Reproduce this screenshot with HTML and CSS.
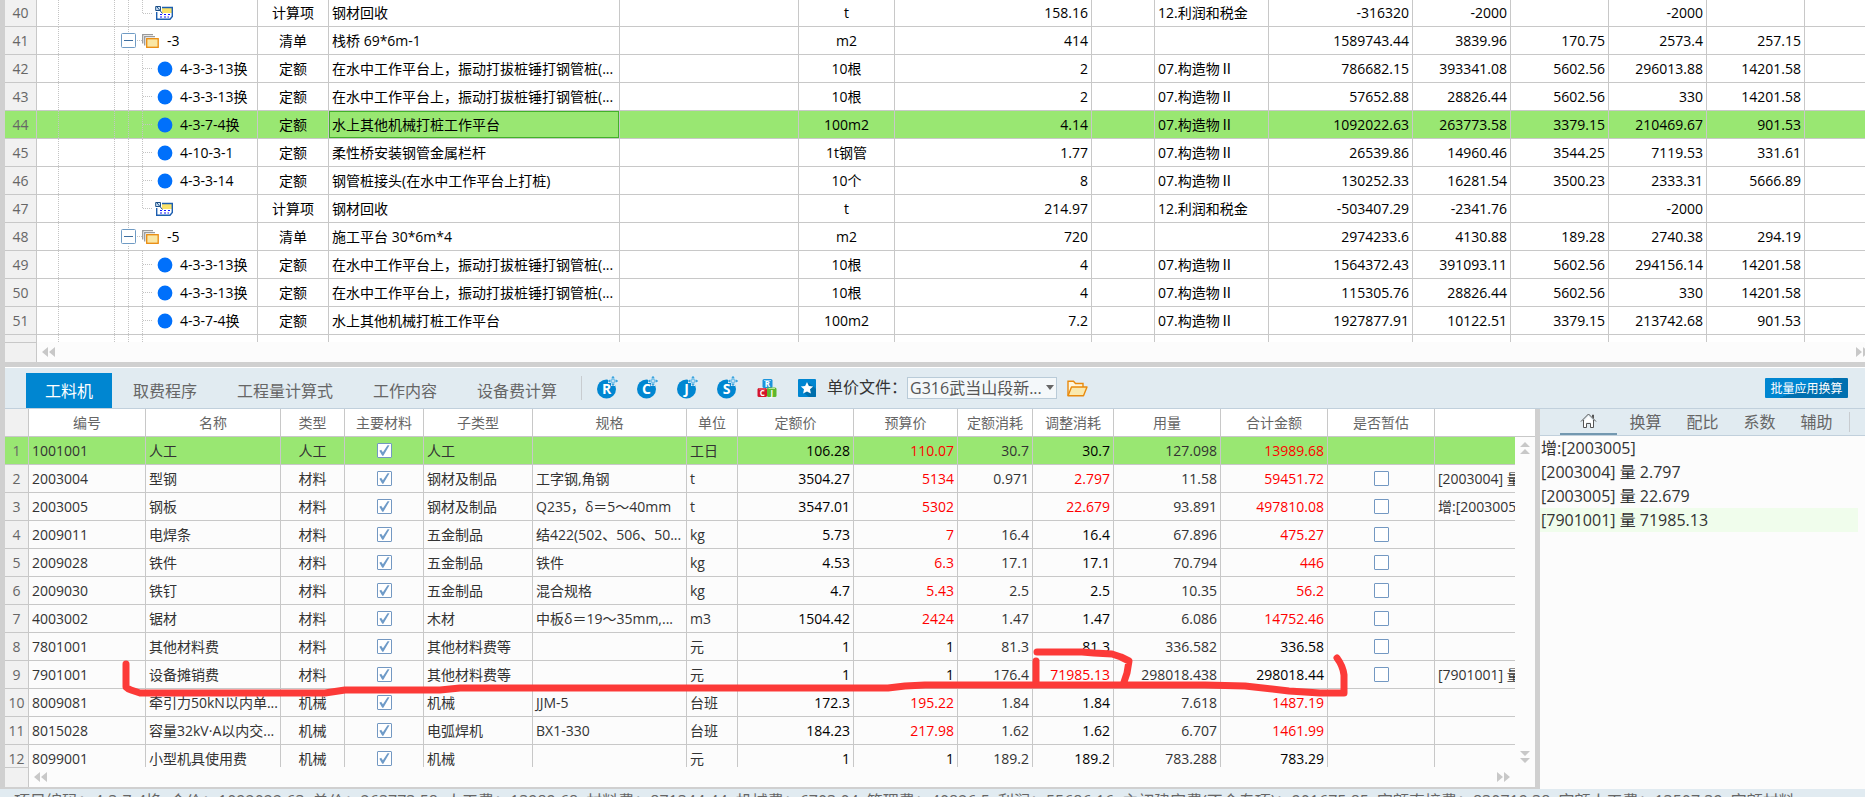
FILE: index.html
```html
<!DOCTYPE html>
<html lang="zh-CN">
<head>
<meta charset="utf-8">
<title>工料机</title>
<link rel="stylesheet" href="styles.css">
</head>
<body>
<svg class="defs" aria-hidden="true">
  <defs>
    <symbol id="g-leaf" viewBox="0 0 120 27"><path d="M21.5 0V27M77.5 0V27M91.5 0V27M105.5 0V27M106 13.5H115" class="guide"/></symbol>
    <symbol id="g-last" viewBox="0 0 118 27"><path d="M21.5 0V27M77.5 0V27M91.5 0V27M105.5 0V13M106 13.5H115" class="guide"/></symbol>
    <symbol id="g-node" viewBox="0 0 105 27"><path d="M21.5 0V27M77.5 0V27M91.5 0V6M91.5 23V27M100 13.5H105" class="guide"/><rect x="84.5" y="6.500" width="14" height="14" rx="1" fill="#fff" stroke="#6f9bc4"/><path d="M87 13.500H96" stroke="#3f6f9f"/></symbol>
    <symbol id="i-dot" viewBox="0 0 16 16"><circle cx="8" cy="8" r="7.400" fill="#0070fb"/></symbol>
    <symbol id="i-stack" viewBox="0 0 17 16"><path d="M.7 10.500V1.700H11M2.700 12.500V3.700H13" fill="none" stroke="#9a9a9a" stroke-width="1.300"/><rect x="4.700" y="5.700" width="11.500" height="8.600" fill="#fae7a5" stroke="#e98a0d" stroke-width="1.300"/></symbol>
    <symbol id="i-calc" viewBox="0 0 18 16"><rect x="2" y="3" width="15" height="11" fill="#fff"/><rect x="7" y="3" width="10" height="5" fill="#fbe36a"/><path d="M7 2.500H17.300V11.500L15 14.300H1.700V7" fill="none" stroke="#1d5fb0" stroke-width="1.400"/><path d="M.7 1.500H5.500V5.500H.7ZM2 2L7.500 8.500" fill="#cfe3f7" stroke="#1c4f87" stroke-width="1"/><path d="M5 9.500H7M9 9.500H11M13 9.500H15M5 12H7M9 12H11M12.500 12H14" stroke="#1414ff" stroke-width="1.200"/></symbol>
    <symbol id="i-plus" viewBox="0 0 10 10"><path d="M5 0V10M0 5H10" stroke="#fff" stroke-width="4"/><path d="M5 .5V9.500M.5 5H9.500" stroke="#0086d1" stroke-width="2.600"/><path d="M5 1.500V8.500M1.500 5H8.500" stroke="#fff" stroke-width="1"/></symbol>
  </defs>
</svg>

<main class="app">
<section class="items">
<table class="grid items-table">
<colgroup><col class="a1"><col class="a2"><col class="a3"><col class="a4"><col class="a5"><col class="a6"><col class="a7"><col class="a8"><col class="a9"><col class="a10"><col class="a11"><col class="a12"><col class="a11"><col class="a12"><col></colgroup>
<tbody>
<tr><th scope="row">40</th><td class="tree"><div><svg class="gl"><use href="#g-last"/></svg><svg class="ic"><use href="#i-calc"/></svg></div></td><td class="c">计算项</td><td>钢材回收</td><td></td><td class="c">t</td><td class="n">158.16</td><td></td><td>12.利润和税金</td><td class="n">-316320</td><td class="n">-2000</td><td></td><td class="n">-2000</td><td></td><td></td></tr>
<tr><th scope="row">41</th><td class="tree"><div><svg class="gn"><use href="#g-node"/></svg><svg class="is"><use href="#i-stack"/></svg><span>-3</span></div></td><td class="c">清单</td><td>栈桥 69*6m-1</td><td></td><td class="c">m2</td><td class="n">414</td><td></td><td></td><td class="n">1589743.44</td><td class="n">3839.96</td><td class="n">170.75</td><td class="n">2573.4</td><td class="n">257.15</td><td></td></tr>
<tr><th scope="row">42</th><td class="tree"><div><svg class="gf"><use href="#g-leaf"/></svg><svg class="id"><use href="#i-dot"/></svg><span>4-3-3-13换</span></div></td><td class="c">定额</td><td>在水中工作平台上，振动打拔桩锤打钢管桩(...</td><td></td><td class="c">10根</td><td class="n">2</td><td></td><td>07.构造物Ⅱ</td><td class="n">786682.15</td><td class="n">393341.08</td><td class="n">5602.56</td><td class="n">296013.88</td><td class="n">14201.58</td><td></td></tr>
<tr><th scope="row">43</th><td class="tree"><div><svg class="gf"><use href="#g-leaf"/></svg><svg class="id"><use href="#i-dot"/></svg><span>4-3-3-13换</span></div></td><td class="c">定额</td><td>在水中工作平台上，振动打拔桩锤打钢管桩(...</td><td></td><td class="c">10根</td><td class="n">2</td><td></td><td>07.构造物Ⅱ</td><td class="n">57652.88</td><td class="n">28826.44</td><td class="n">5602.56</td><td class="n">330</td><td class="n">14201.58</td><td></td></tr>
<tr class="sel"><th scope="row">44</th><td class="tree"><div><svg class="gf"><use href="#g-leaf"/></svg><svg class="id"><use href="#i-dot"/></svg><span>4-3-7-4换</span></div></td><td class="c">定额</td><td class="focus">水上其他机械打桩工作平台</td><td></td><td class="c">100m2</td><td class="n">4.14</td><td></td><td>07.构造物Ⅱ</td><td class="n">1092022.63</td><td class="n">263773.58</td><td class="n">3379.15</td><td class="n">210469.67</td><td class="n">901.53</td><td></td></tr>
<tr><th scope="row">45</th><td class="tree"><div><svg class="gf"><use href="#g-leaf"/></svg><svg class="id"><use href="#i-dot"/></svg><span>4-10-3-1</span></div></td><td class="c">定额</td><td>柔性桥安装钢管金属栏杆</td><td></td><td class="c">1t钢管</td><td class="n">1.77</td><td></td><td>07.构造物Ⅱ</td><td class="n">26539.86</td><td class="n">14960.46</td><td class="n">3544.25</td><td class="n">7119.53</td><td class="n">331.61</td><td></td></tr>
<tr><th scope="row">46</th><td class="tree"><div><svg class="gf"><use href="#g-leaf"/></svg><svg class="id"><use href="#i-dot"/></svg><span>4-3-3-14</span></div></td><td class="c">定额</td><td>钢管桩接头(在水中工作平台上打桩)</td><td></td><td class="c">10个</td><td class="n">8</td><td></td><td>07.构造物Ⅱ</td><td class="n">130252.33</td><td class="n">16281.54</td><td class="n">3500.23</td><td class="n">2333.31</td><td class="n">5666.89</td><td></td></tr>
<tr><th scope="row">47</th><td class="tree"><div><svg class="gl"><use href="#g-last"/></svg><svg class="ic"><use href="#i-calc"/></svg></div></td><td class="c">计算项</td><td>钢材回收</td><td></td><td class="c">t</td><td class="n">214.97</td><td></td><td>12.利润和税金</td><td class="n">-503407.29</td><td class="n">-2341.76</td><td></td><td class="n">-2000</td><td></td><td></td></tr>
<tr><th scope="row">48</th><td class="tree"><div><svg class="gn"><use href="#g-node"/></svg><svg class="is"><use href="#i-stack"/></svg><span>-5</span></div></td><td class="c">清单</td><td>施工平台 30*6m*4</td><td></td><td class="c">m2</td><td class="n">720</td><td></td><td></td><td class="n">2974233.6</td><td class="n">4130.88</td><td class="n">189.28</td><td class="n">2740.38</td><td class="n">294.19</td><td></td></tr>
<tr><th scope="row">49</th><td class="tree"><div><svg class="gf"><use href="#g-leaf"/></svg><svg class="id"><use href="#i-dot"/></svg><span>4-3-3-13换</span></div></td><td class="c">定额</td><td>在水中工作平台上，振动打拔桩锤打钢管桩(...</td><td></td><td class="c">10根</td><td class="n">4</td><td></td><td>07.构造物Ⅱ</td><td class="n">1564372.43</td><td class="n">391093.11</td><td class="n">5602.56</td><td class="n">294156.14</td><td class="n">14201.58</td><td></td></tr>
<tr><th scope="row">50</th><td class="tree"><div><svg class="gf"><use href="#g-leaf"/></svg><svg class="id"><use href="#i-dot"/></svg><span>4-3-3-13换</span></div></td><td class="c">定额</td><td>在水中工作平台上，振动打拔桩锤打钢管桩(...</td><td></td><td class="c">10根</td><td class="n">4</td><td></td><td>07.构造物Ⅱ</td><td class="n">115305.76</td><td class="n">28826.44</td><td class="n">5602.56</td><td class="n">330</td><td class="n">14201.58</td><td></td></tr>
<tr><th scope="row">51</th><td class="tree"><div><svg class="gf"><use href="#g-leaf"/></svg><svg class="id"><use href="#i-dot"/></svg><span>4-3-7-4换</span></div></td><td class="c">定额</td><td>水上其他机械打桩工作平台</td><td></td><td class="c">100m2</td><td class="n">7.2</td><td></td><td>07.构造物Ⅱ</td><td class="n">1927877.91</td><td class="n">10122.51</td><td class="n">3379.15</td><td class="n">213742.68</td><td class="n">901.53</td><td></td></tr>
<tr class="stub"><th></th><td class="tree"><div><svg class="gf"><use href="#g-leaf"/></svg></div></td><td></td><td></td><td></td><td></td><td></td><td></td><td></td><td></td><td></td><td></td><td></td><td></td><td></td></tr>
</tbody>
</table>
<div class="hscroll wide"><span class="corner"></span>
<button type="button" aria-label="向左滚动"><svg width="13" height="10" viewBox="0 0 13 10"><path d="M6 0V10L0 5ZM13 0V10L7 5Z"/></svg></button>
<button type="button" aria-label="向右滚动"><svg width="13" height="10" viewBox="0 0 13 10"><path d="M0 0V10L6 5ZM7 0V10L13 5Z"/></svg></button></div>
</section>

<section class="detail">
<header class="toolbar">
<nav class="tabs"><button type="button" class="on">工料机</button><button type="button">取费程序</button><button type="button">工程量计算式</button><button type="button">工作内容</button><button type="button">设备费计算</button></nav>
<span class="sep"></span>
<div class="tools">
<button type="button" aria-label="人工"><svg width="24" height="26" viewBox="0 0 24 26"><circle cx="10.500" cy="14" r="9.500" fill="#0086d1"/><text x="10.500" y="19">R</text><use href="#i-plus" x="12" y="1" width="10" height="10"/></svg></button>
<button type="button" aria-label="材料"><svg width="24" height="26" viewBox="0 0 24 26"><circle cx="10.500" cy="14" r="9.500" fill="#0086d1"/><text x="10.500" y="19">C</text><use href="#i-plus" x="12" y="1" width="10" height="10"/></svg></button>
<button type="button" aria-label="机械"><svg width="24" height="26" viewBox="0 0 24 26"><circle cx="10.500" cy="14" r="9.500" fill="#0086d1"/><text x="10.500" y="19">J</text><use href="#i-plus" x="12" y="1" width="10" height="10"/></svg></button>
<button type="button" aria-label="设备"><svg width="24" height="26" viewBox="0 0 24 26"><circle cx="10.500" cy="14" r="9.500" fill="#0086d1"/><text x="10.500" y="19">S</text><use href="#i-plus" x="12" y="1" width="10" height="10"/></svg></button>
<button type="button" aria-label="工料机库"><svg width="24" height="26" viewBox="0 0 24 26"><rect x="6.500" y="4" width="10" height="9" rx="1.500" fill="#1b94dc"/><rect x="1.500" y="13" width="9.500" height="9" rx="1.500" fill="#d4142a"/><rect x="11" y="12.500" width="9.500" height="9.500" rx="1.500" fill="#5cb82c"/><path d="M8 5.500H15" stroke="#8fd0f5"/><path d="M3 14H9.500" stroke="#f07a86"/><path d="M12.500 13.500H19" stroke="#b8e698"/><g class="tiny"><text x="11.500" y="11.500">R</text><text x="6.300" y="20.500">C</text><text x="15.800" y="20.500">J</text></g></svg></button>
<button type="button" aria-label="收藏"><svg width="24" height="26" viewBox="0 0 24 26"><rect x="2" y="4" width="18" height="18" rx="1" fill="#0086d1"/><path d="M11 7L17 11L20 14V21Q20 22 19 22H13L7.500 17.500Z" fill="#006eab"/><path d="M11 7L12.900 10.900L17.200 11.400L14 14.300L14.900 18.500L11 16.400L7.100 18.500L8 14.300L4.800 11.400L9.100 10.900Z" fill="#fff"/></svg></button>
</div>
<label class="pf" for="pf">单价文件：</label>
<div class="pick"><select id="pf"><option>G316武当山段新...</option></select><svg width="8" height="5" viewBox="0 0 8 5"><path d="M0 0H8L4 5Z" fill="#666"/></svg></div>
<button type="button" class="open" aria-label="打开"><svg width="21" height="17" viewBox="0 0 21 17"><path d="M1 15.700V1.300H6.500L8.500 3.500H16V7" fill="#fff6dc" stroke="#e98a0d" stroke-width="1.400"/><path d="M1 15.700L4.500 7H20L16.500 15.700Z" fill="#fae9ae" stroke="#e98a0d" stroke-width="1.400" stroke-linejoin="round"/></svg></button>
<button type="button" class="apply">批量应用换算</button>
</header>

<div class="panes">
<div class="left">
<div class="gridwrap">
<table class="grid mat">
<colgroup><col class="b1"><col class="b2"><col class="b3"><col class="b4"><col class="b5"><col class="b6"><col class="b7"><col class="b8"><col class="b9"><col class="b10"><col class="b11"><col class="b12"><col class="b13"><col class="b13"><col class="b13"><col></colgroup>
<thead><tr><th class="corner"></th><th>编号</th><th>名称</th><th>类型</th><th>主要材料</th><th>子类型</th><th>规格</th><th>单位</th><th>定额价</th><th>预算价</th><th>定额消耗</th><th>调整消耗</th><th>用量</th><th>合计金额</th><th>是否暂估</th><th></th></tr></thead>
<tbody>
<tr class="sel"><th scope="row">1</th><td>1001001</td><td>人工</td><td class="c">人工</td><td class="c"><input type="checkbox" checked aria-label="主要材料"></td><td>人工</td><td></td><td>工日</td><td class="n k">106.28</td><td class="n r">110.07</td><td class="n">30.7</td><td class="n k">30.7</td><td class="n">127.098</td><td class="n r">13989.68</td><td></td><td></td></tr>
<tr><th scope="row">2</th><td>2003004</td><td>型钢</td><td class="c">材料</td><td class="c"><input type="checkbox" checked aria-label="主要材料"></td><td>钢材及制品</td><td>工字钢,角钢</td><td>t</td><td class="n k">3504.27</td><td class="n r">5134</td><td class="n">0.971</td><td class="n r">2.797</td><td class="n">11.58</td><td class="n r">59451.72</td><td class="c"><input type="checkbox" aria-label="是否暂估"></td><td>[2003004] 量</td></tr>
<tr><th scope="row">3</th><td>2003005</td><td>钢板</td><td class="c">材料</td><td class="c"><input type="checkbox" checked aria-label="主要材料"></td><td>钢材及制品</td><td>Q235，δ＝5～40mm</td><td>t</td><td class="n k">3547.01</td><td class="n r">5302</td><td></td><td class="n r">22.679</td><td class="n">93.891</td><td class="n r">497810.08</td><td class="c"><input type="checkbox" aria-label="是否暂估"></td><td>增:[2003005</td></tr>
<tr><th scope="row">4</th><td>2009011</td><td>电焊条</td><td class="c">材料</td><td class="c"><input type="checkbox" checked aria-label="主要材料"></td><td>五金制品</td><td>结422(502、506、50...</td><td>kg</td><td class="n k">5.73</td><td class="n r">7</td><td class="n">16.4</td><td class="n k">16.4</td><td class="n">67.896</td><td class="n r">475.27</td><td class="c"><input type="checkbox" aria-label="是否暂估"></td><td></td></tr>
<tr><th scope="row">5</th><td>2009028</td><td>铁件</td><td class="c">材料</td><td class="c"><input type="checkbox" checked aria-label="主要材料"></td><td>五金制品</td><td>铁件</td><td>kg</td><td class="n k">4.53</td><td class="n r">6.3</td><td class="n">17.1</td><td class="n k">17.1</td><td class="n">70.794</td><td class="n r">446</td><td class="c"><input type="checkbox" aria-label="是否暂估"></td><td></td></tr>
<tr><th scope="row">6</th><td>2009030</td><td>铁钉</td><td class="c">材料</td><td class="c"><input type="checkbox" checked aria-label="主要材料"></td><td>五金制品</td><td>混合规格</td><td>kg</td><td class="n k">4.7</td><td class="n r">5.43</td><td class="n">2.5</td><td class="n k">2.5</td><td class="n">10.35</td><td class="n r">56.2</td><td class="c"><input type="checkbox" aria-label="是否暂估"></td><td></td></tr>
<tr><th scope="row">7</th><td>4003002</td><td>锯材</td><td class="c">材料</td><td class="c"><input type="checkbox" checked aria-label="主要材料"></td><td>木材</td><td>中板δ＝19～35mm,...</td><td>m3</td><td class="n k">1504.42</td><td class="n r">2424</td><td class="n">1.47</td><td class="n k">1.47</td><td class="n">6.086</td><td class="n r">14752.46</td><td class="c"><input type="checkbox" aria-label="是否暂估"></td><td></td></tr>
<tr><th scope="row">8</th><td>7801001</td><td>其他材料费</td><td class="c">材料</td><td class="c"><input type="checkbox" checked aria-label="主要材料"></td><td>其他材料费等</td><td></td><td>元</td><td class="n k">1</td><td class="n k">1</td><td class="n">81.3</td><td class="n k">81.3</td><td class="n">336.582</td><td class="n k">336.58</td><td class="c"><input type="checkbox" aria-label="是否暂估"></td><td></td></tr>
<tr><th scope="row">9</th><td>7901001</td><td>设备摊销费</td><td class="c">材料</td><td class="c"><input type="checkbox" checked aria-label="主要材料"></td><td>其他材料费等</td><td></td><td>元</td><td class="n k">1</td><td class="n k">1</td><td class="n">176.4</td><td class="n r">71985.13</td><td class="n">298018.438</td><td class="n k">298018.44</td><td class="c"><input type="checkbox" aria-label="是否暂估"></td><td>[7901001] 量</td></tr>
<tr><th scope="row">10</th><td>8009081</td><td>牵引力50kN以内单...</td><td class="c">机械</td><td class="c"><input type="checkbox" checked aria-label="主要材料"></td><td>机械</td><td>JJM-5</td><td>台班</td><td class="n k">172.3</td><td class="n r">195.22</td><td class="n">1.84</td><td class="n k">1.84</td><td class="n">7.618</td><td class="n r">1487.19</td><td></td><td></td></tr>
<tr><th scope="row">11</th><td>8015028</td><td>容量32kV·A以内交...</td><td class="c">机械</td><td class="c"><input type="checkbox" checked aria-label="主要材料"></td><td>电弧焊机</td><td>BX1-330</td><td>台班</td><td class="n k">184.23</td><td class="n r">217.98</td><td class="n">1.62</td><td class="n k">1.62</td><td class="n">6.707</td><td class="n r">1461.99</td><td></td><td></td></tr>
<tr><th scope="row">12</th><td>8099001</td><td>小型机具使用费</td><td class="c">机械</td><td class="c"><input type="checkbox" checked aria-label="主要材料"></td><td>机械</td><td></td><td>元</td><td class="n k">1</td><td class="n k">1</td><td class="n">189.2</td><td class="n k">189.2</td><td class="n">783.288</td><td class="n k">783.29</td><td></td><td></td></tr>
</tbody>
</table>
<div class="vscroll"><button type="button" aria-label="向上滚动"><svg width="10" height="12" viewBox="0 0 10 12"><path d="M0 5H10L5 0ZM0 12H10L5 7Z"/></svg></button><button type="button" aria-label="向下滚动"><svg width="10" height="12" viewBox="0 0 10 12"><path d="M0 0H10L5 5ZM0 7H10L5 12Z"/></svg></button></div>
<svg class="marks" width="1360" height="60" viewBox="0 640 1360 60" aria-hidden="true"><path d="M126 664V687Q128 689 131 690L140 693H325L345 690H440L460 688H888L905 686L925 685H1205L1245 686L1289 691L1320 693H1344V675Q1343 666 1337 658M1037 652H1082L1094 653L1112 654L1121 657L1129 661L1127 673L1124 682M1036 661V684"/></svg>
</div>
<div class="hscroll"><span class="corner"></span>
<button type="button" aria-label="向左滚动"><svg width="13" height="10" viewBox="0 0 13 10"><path d="M6 0V10L0 5ZM13 0V10L7 5Z"/></svg></button>
<button type="button" aria-label="向右滚动"><svg width="13" height="10" viewBox="0 0 13 10"><path d="M0 0V10L6 5ZM7 0V10L13 5Z"/></svg></button></div>
</div>
<aside class="right">
<nav class="subtabs"><button type="button" class="on" aria-label="主页"><svg width="17" height="16" viewBox="0 0 17 16"><path d="M4 8L8.500 3L13 8V14.500H11V9.500H6V14.500H4Z" fill="#fff"/><path d="M1 8.500L8.500 1L16 8.500M3.500 7V14.500H6.500V10.500H10.500V14.500H13.500V7M12.500 4.500V2H13.500V5.500" fill="none" stroke="#555"/></svg></button><button type="button">换算</button><button type="button">配比</button><button type="button">系数</button><button type="button">辅助</button><span class="sep"></span></nav>
<ul><li>增:[2003005]</li><li>[2003004] 量 2.797</li><li>[2003005] 量 22.679</li><li class="hl">[7901001] 量 71985.13</li></ul>
</aside>
</div>
</section>
<footer class="status"><span>项目编码：4-3-7-4换</span><span>合价：1092022.63</span><span>单价：263773.58</span><span>人工费：13989.68</span><span>材料费：871344.44</span><span>机械费：6703.04</span><span>管理费：40826.5</span><span>利润：55686.16</span><span>主初建安费(不含专项)：901675.85</span><span>定额直接费：830719.38</span><span>定额人工费：13507.39</span><span>定额材料</span></footer>
</main>
</body>
</html>
```
FILE: styles.css
```css
* { box-sizing: border-box; }
html, body { height: 100%; }
body {
  margin: 0;
  overflow: hidden;
  background: #d0d0d0;
  color: #000;
  font: 14px/27px "Open Sans", "Noto Sans CJK SC", sans-serif;
}
button { border: 0; padding: 0; margin: 0; background: none; font: inherit; color: inherit; display: block; }
svg { display: block; flex: none; }
.defs { position: absolute; width: 0; height: 0; }
.guide { fill: none; stroke: #c4c4c4; stroke-dasharray: 1 1; }
.app { padding-left: 5px; }

.grid { width: 100%; table-layout: fixed; border-collapse: separate; border-spacing: 0; }
.grid td, .grid th {
  height: 28px;
  padding: 0 3px;
  border-right: 1px solid #c8c8c8;
  border-bottom: 1px solid #c8c8c8;
  font-weight: 400;
  text-align: left;
  white-space: nowrap;
  overflow: hidden;
}
.grid tbody th { background: #f1f1f1; color: #666; text-align: center; padding: 0; }
.grid td.c { text-align: center; }
.grid td.n { text-align: right; }
.grid td:last-child { border-right: 0; }
.grid tr.sel td, .grid tr.sel th { background: #99e772; }

.items-table { background: #fff; }
.items-table tr:first-child td, .items-table tr:first-child th { height: 27px; line-height: 26px; }
.items-table td.tree { padding: 0; }
.items-table td.focus { box-shadow: inset 0 0 0 1px #43b02a; }
.items-table tr.stub td, .items-table tr.stub th { height: 7px; line-height: 6px; border-bottom: 0; }
.items-table tr.stub .tree div { height: 7px; align-items: flex-start; overflow: hidden; }
.tree div { display: flex; align-items: center; height: 27px; }
.items-table tr:first-child .tree div { height: 26px; }
.gf { width: 120px; height: 27px; }
.gl { width: 118px; height: 27px; }
.gn { width: 105px; height: 27px; }
.id { width: 16px; height: 16px; }
.ic { width: 18px; height: 16px; }
.is { width: 17px; height: 16px; }
.id + span { margin-left: 7px; }
.is + span { margin-left: 8px; }
.a1 { width: 32px; } .a2 { width: 221px; } .a3 { width: 71px; } .a4 { width: 291px; } .a5 { width: 179px; }
.a6 { width: 96px; } .a7 { width: 197px; } .a8 { width: 63px; } .a9 { width: 114px; } .a10 { width: 144px; }
.a11 { width: 98px; } .a12 { width: 98px; }

.hscroll { display: flex; align-items: center; height: 20px; background: #fcfcfc; padding-right: 25px; }
.hscroll .corner { width: 24px; height: 20px; border: solid #c8c8c8; border-width: 1px 1px 0 0; background: #f1f1f1; }
.hscroll button { margin-left: 5px; }
.hscroll button:last-child { margin-left: auto; }
.hscroll path, .vscroll path { fill: #c8c8c8; }
.hscroll.wide { padding-right: 0; }
.hscroll.wide .corner { width: 32px; }
.hscroll.wide button:last-child { margin-right: -4px; }
.items { overflow: hidden; border-bottom: 5px solid #d0d0d0; }

.toolbar {
  display: flex;
  align-items: center;
  height: 42px;
  padding: 0 17px 0 20px;
  background: #e1ebf1;
  border-top: 1px solid #fff;
  border-bottom: 1px solid #c1d0dc;
  font-size: 16px;
}
.tabs { display: flex; align-self: flex-end; }
.tabs button { height: 35px; line-height: 34px; padding: 0 19px; margin: 0 1px; color: #666; white-space: nowrap; }
.tabs .on { background: #0086d1; color: #fff; }
.sep { width: 1px; height: 24px; background: #c8ccd0; }
.tabs + .sep { margin: 0 14px 0 4px; }
.tools { display: flex; gap: 16px; align-self: flex-start; padding-top: 7px; }
.tools text { font: 700 14px "Open Sans", sans-serif; fill: #fff; text-anchor: middle; }
.tools .tiny text { font-size: 8px; }
.pf { color: #333; margin-left: 7px; width: 80px; line-height: 24px; white-space: nowrap; align-self: flex-start; margin-top: 7px; }
.pick { position: relative; align-self: flex-start; margin-top: 9px; }
.pick select {
  appearance: none;
  display: block;
  width: 150px;
  height: 22px;
  padding: 0 0 0 2px;
  border: 1px solid #b9cbd8;
  border-radius: 0;
  background: #f4f8fa;
  color: #555;
  font: 16px/20px "Open Sans", "Noto Sans CJK SC", sans-serif;
}
.pick svg { position: absolute; right: 3px; top: 8px; }
.open { margin-left: 10px; align-self: flex-start; padding-top: 12px; }
.apply {
  margin-left: auto;
  align-self: flex-start;
  margin-top: 10px;
  width: 83px;
  height: 20px;
  border-radius: 1px;
  background: linear-gradient(160deg, #0086d1 50%, #0070b0 50%);
  color: #fff;
  font-size: 12px;
  line-height: 19px;
  white-space: nowrap;
}

.panes { display: flex; align-items: stretch; }
.left { flex: 1; min-width: 0; background: #fcfcfc; border-bottom: 2px solid #d0d0d0; }
.gridwrap { position: relative; height: 358px; overflow: hidden; }
.mat { color: #333; }
.mat thead th { background: #fff; color: #666; text-align: center; padding: 0; }
.mat thead th.corner { background: #f1f1f1; }
.mat thead th:last-child { border-right: 0; }
.mat .k { color: #000; }
.mat .r { color: #f00; }
.b1 { width: 24px; } .b2 { width: 117px; } .b3 { width: 135px; } .b4 { width: 64px; } .b5 { width: 79px; }
.b6 { width: 109px; } .b7 { width: 154px; } .b8 { width: 51px; } .b9 { width: 116px; } .b10 { width: 104px; }
.b11 { width: 75px; } .b12 { width: 81px; } .b13 { width: 107px; }
.mat input {
  appearance: none;
  display: block;
  position: relative;
  width: 15px;
  height: 15px;
  margin: 0 auto;
  border: 1px solid #7398c2;
  border-radius: 1px;
  background: #fff;
}
.mat input:checked::after {
  content: "";
  position: absolute;
  inset: 1px;
  background: #6f9bc8;
  clip-path: polygon(8% 52%, 24% 44%, 40% 66%, 82% 2%, 100% 2%, 44% 98%, 34% 98%);
}
.vscroll {
  position: absolute;
  top: 28px;
  right: 0;
  bottom: 0;
  width: 20px;
  padding: 5px 5px 4px;
  background: #fcfcfc;
  display: flex;
  flex-direction: column;
  justify-content: space-between;
}
.marks { position: absolute; left: -5px; top: 231px; pointer-events: none; }
.marks path { fill: none; stroke: #fc3a38; stroke-width: 7; stroke-linecap: round; stroke-linejoin: round; }

.right { width: 330px; border-left: 5px solid #d0d0d0; background: #fcfcfc; font-size: 16px; color: #333; }
.subtabs { display: flex; align-items: center; height: 27px; padding-left: 20px; background: #e1ebf1; border-bottom: 1px solid #c1d0dc; color: #666; }
.subtabs button { width: 57px; height: 26px; line-height: 26px; text-align: center; }
.subtabs .on { border-bottom: 2px solid #7398b0; display: flex; align-items: center; justify-content: center; }
.subtabs .sep { height: 20px; margin-left: 4px; }
.right ul { list-style: none; margin: 0 7px 0 0; padding: 0; }
.right li { height: 24px; line-height: 24px; padding-left: 1px; }
.right li.hl { background: #f0fdec; }

.status {
  display: flex;
  gap: 8px;
  margin-left: -5px;
  padding: 0 14px;
  background: #e1ebf1;
  color: #666;
  font-size: 16px;
  line-height: 25px;
  white-space: nowrap;
}
```
